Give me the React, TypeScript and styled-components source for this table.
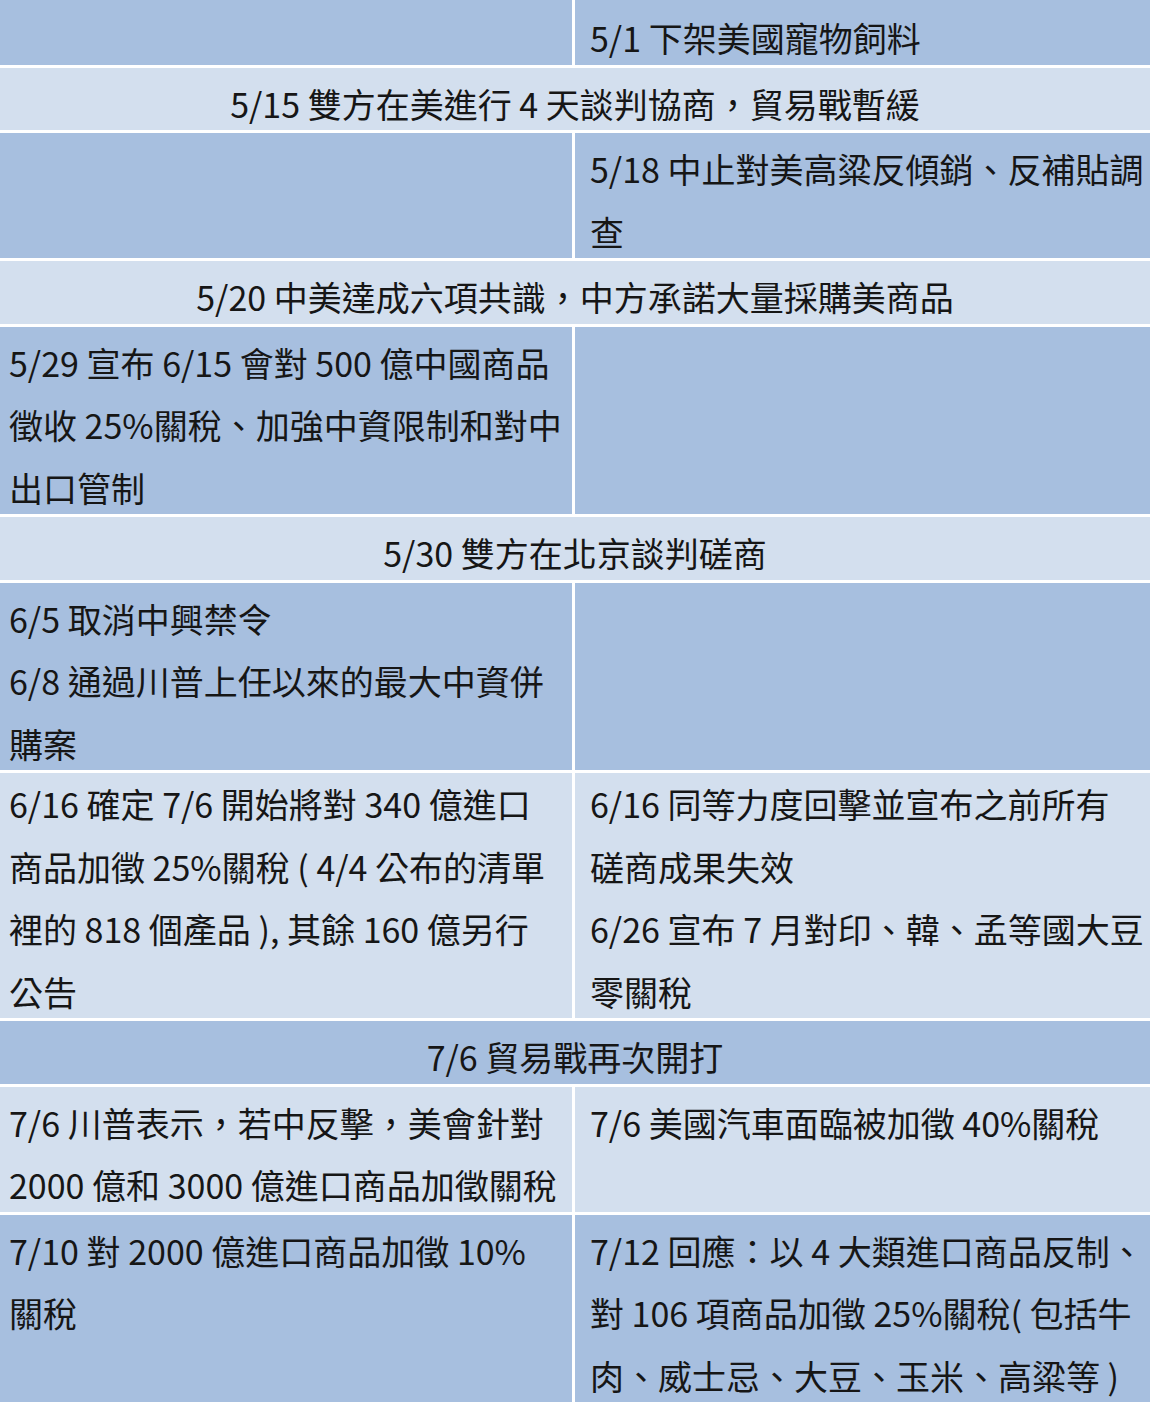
import React from "react";
import styled, { createGlobalStyle } from "styled-components";

const Global = createGlobalStyle`
  html, body { margin: 0; padding: 0; background: #ffffff; }
  body { font-family: "Noto Sans CJK TC", "Noto Sans", sans-serif; }
`;

const Table = styled.div`
  width: 1150px;
  height: 1403px;
  display: flex;
  flex-direction: column;
  gap: 3px;
  background: #ffffff;
  overflow: hidden;
`;

const Row = styled.div<{ $tone: "dark" | "light" }>`
  display: grid;
  grid-template-columns: 572px 575px;
  column-gap: 3px;
  background: #ffffff;
  --cell-bg: ${(p) => (p.$tone === "dark" ? "#a7bfdf" : "#d3dfee")};
`;

const Cell = styled.div<{ $side: "left" | "right" }>`
  background: var(--cell-bg);
  padding-left: ${(p) => (p.$side === "left" ? "9px" : "15px")};
  min-width: 0;
  overflow: hidden;
`;

const Wide = styled.div`
  grid-column: 1 / -1;
  background: var(--cell-bg);
  text-align: center;
`;

const Text = styled.div<{ $top?: number }>`
  font-family: "Noto Sans CJK TC", "Noto Sans CJK JP", sans-serif;
  font-size: 34px;
  line-height: 62.5px;
  color: #161616;
  white-space: nowrap;
  padding-top: ${(p) => p.$top ?? 5}px;
  margin-bottom: -5px;
`;

const Line = styled.div``;

type CellData = string[] | null;
type Tone = "dark" | "light";
type RowData =
  | { tone: Tone; wide: string; top?: number }
  | { tone: Tone; left: CellData; right: CellData; top?: number };

const rows: RowData[] = [
  { tone: "dark", left: null, right: ["5/1 下架美國寵物飼料"], top: 7 },
  { tone: "light", wide: "5/15 雙方在美進行 4 天談判協商，貿易戰暫緩" },
  { tone: "dark", left: null, right: ["5/18 中止對美高粱反傾銷、反補貼調", "查"] },
  { tone: "light", wide: "5/20 中美達成六項共識，中方承諾大量採購美商品" },
  {
    tone: "dark",
    left: ["5/29 宣布 6/15 會對 500 億中國商品", "徵收 25%關稅、加強中資限制和對中", "出口管制"],
    right: null,
  },
  { tone: "light", wide: "5/30 雙方在北京談判磋商" },
  {
    tone: "dark",
    left: ["6/5 取消中興禁令", "6/8 通過川普上任以來的最大中資併", "購案"],
    right: null,
  },
  {
    tone: "light",
    left: ["6/16 確定 7/6 開始將對 340 億進口", "商品加徵 25%關稅 ( 4/4 公布的清單", "裡的 818 個產品 ), 其餘 160 億另行", "公告"],
    right: ["6/16 同等力度回擊並宣布之前所有", "磋商成果失效", "6/26 宣布 7 月對印、韓、孟等國大豆", "零關稅"],
    top: 0,
  },
  { tone: "dark", wide: "7/6 貿易戰再次開打" },
  {
    tone: "light",
    left: ["7/6 川普表示，若中反擊，美會針對", "2000 億和 3000 億進口商品加徵關稅"],
    right: ["7/6 美國汽車面臨被加徵 40%關稅"],
  },
  {
    tone: "dark",
    left: ["7/10 對 2000 億進口商品加徵 10%", "關稅"],
    right: ["7/12 回應：以 4 大類進口商品反制、", "對 106 項商品加徵 25%關稅( 包括牛", "肉、威士忌、大豆、玉米、高粱等 )"],
  },
];

const Lines: React.FC<{ lines: CellData; top?: number }> = ({ lines, top }) => (
  <Text $top={top}>
    {lines ? lines.map((l, i) => <Line key={i}>{l}</Line>) : <Line>&nbsp;</Line>}
  </Text>
);

export default function App() {
  return (
    <>
      <Global />
      <Table>
        {rows.map((r, i) => (
          <Row key={i} $tone={r.tone}>
            {"wide" in r ? (
              <Wide>
                <Text $top={r.top}>{r.wide}</Text>
              </Wide>
            ) : (
              <>
                <Cell $side="left">
                  <Lines lines={r.left} top={r.top} />
                </Cell>
                <Cell $side="right">
                  <Lines lines={r.right} top={r.top} />
                </Cell>
              </>
            )}
          </Row>
        ))}
      </Table>
    </>
  );
}
